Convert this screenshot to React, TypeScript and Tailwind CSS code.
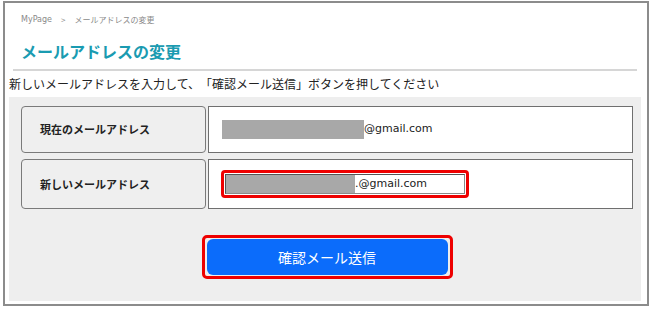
import React from "react";

export default function App() {
  const jp = { fontFamily: '"Noto Sans CJK JP", "Noto Sans", sans-serif' };
  return (
    <div className="w-[654px] h-[309px] bg-white pt-[1px] pl-[3px] [text-spacing-trim:space-all]" style={jp}>
      <div className="w-[646px] h-[305px] border-2 border-[#8c8c8c] pl-[4px] pr-[6px] flex flex-col">
        <div className="h-[26px] pl-[12px] pt-[7px] text-[8px] leading-[12px] text-[#8a8a8a] flex items-center gap-[9px]">
          <span style={{ fontFamily: '"DejaVu Sans", sans-serif' }} className="text-[8px]">MyPage</span>
          <span className="text-[8px]">&gt;</span>
          <span>メールアドレスの変更</span>
        </div>
        <div className="h-[40px] pl-[12px] pt-[3px] flex items-center text-[16px] font-bold text-[#1a9bb1]">
          メールアドレスの変更
        </div>
        <div className="mx-[4px] h-[2px] bg-[#d6d6d6]" />
        <div className="h-[26px] flex items-center text-[12px] text-[#222]">
          新しいメールアドレスを入力して、「確認メール送信」ボタンを押してください
        </div>
        <div className="flex-1 mb-[3px] bg-[#eeeeee] pt-[9px] pl-[12px] pr-[8px] flex flex-col">
          <div className="flex h-[47px] gap-[2px]">
            <div className="w-[185px] rounded-[4px] border border-[#7a7a7a] bg-[#efefef] flex items-center pl-[18px] text-[11px] font-bold text-[#222]">
              現在のメールアドレス
            </div>
            <div className="flex-1 border border-[#6f6f6f] bg-white flex items-center pl-[13px]">
              <div className="w-[142px] h-[19px] bg-[#a8a8a8]" />
              <span className="text-[11px] text-[#222]" style={{ fontFamily: '"DejaVu Sans", sans-serif' }}>@gmail.com</span>
            </div>
          </div>
          <div className="flex h-[50px] gap-[2px] mt-[6px]">
            <div className="w-[185px] rounded-[4px] border border-[#7a7a7a] bg-[#efefef] flex items-center pl-[18px] text-[11px] font-bold text-[#222]">
              新しいメールアドレス
            </div>
            <div className="flex-1 border border-[#6f6f6f] bg-white flex items-center pl-[12px]">
              <div className="w-[248px] h-[28px] rounded-[4px] border-[3px] border-[#ee0000] p-[1px] flex">
                <div className="flex-1 border border-[#8a8a8a] border-t-[#555] border-l-[#555] flex items-center">
                  <div className="w-[129px] h-full bg-[#a8a8a8]" />
                  <span className="text-[11px] text-[#222]" style={{ fontFamily: '"DejaVu Sans", sans-serif' }}>.@gmail.com</span>
                </div>
              </div>
            </div>
          </div>
          <div className="flex justify-center mt-[26px]">
            <div className="w-[251px] h-[44px] rounded-[5px] border-[3px] border-[#ee0000] px-[2px] py-0 flex items-center">
              <div className="w-full h-[36px] rounded-[6px] bg-[#0b6cfb] flex items-center justify-center text-white text-[14px]">
                確認メール送信
              </div>
            </div>
          </div>
        </div>
      </div>
    </div>
  );
}
